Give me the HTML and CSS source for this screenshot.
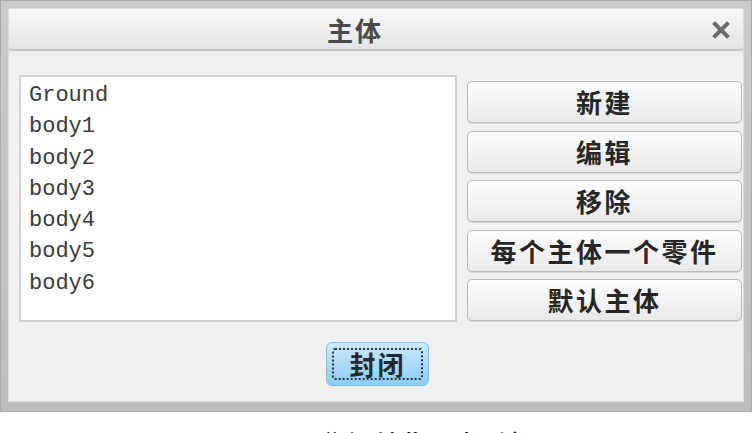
FILE: index.html
```html
<!DOCTYPE html>
<html lang="zh-CN">
<head>
    <meta charset="UTF-8">
    <meta name="viewport" content="width=device-width, initial-scale=1.0">
    <title>主体</title>
    <link rel="stylesheet" href="styles.css">
</head>
<body>
    <div class="frame">
        <div class="window">
            <header class="titlebar">
                <span class="title">主体</span>
                <button class="close-x" title="关闭">
                    <svg width="18" height="18" viewBox="0 0 18 18">
                        <path d="M3 3 L15 15 M15 3 L3 15" stroke="#6b6b6b" stroke-width="4" stroke-linecap="square"/>
                    </svg>
                </button>
            </header>
            <div class="content">
                <div class="row">
                    <ul class="list">
                        <li>Ground</li>
                        <li>body1</li>
                        <li>body2</li>
                        <li>body3</li>
                        <li>body4</li>
                        <li>body5</li>
                        <li>body6</li>
                    </ul>
                    <div class="buttons">
                        <button class="btn">新建</button>
                        <button class="btn">编辑</button>
                        <button class="btn">移除</button>
                        <button class="btn">每个主体一个零件</button>
                        <button class="btn">默认主体</button>
                    </div>
                </div>
                <div class="footer">
                    <button class="btn-close"><span class="focus">封闭</span></button>
                </div>
            </div>
        </div>
    </div>
    <p class="caption">图 3-10 &nbsp;“主体”对话框</p>
</body>
</html>
```

FILE: styles.css
```css
* {
    margin: 0;
    padding: 0;
    box-sizing: border-box;
}
body {
    background: #ffffff;
    width: 756px;
    height: 433px;
    overflow: hidden;
    font-family: "Noto Sans CJK SC", sans-serif;
}
.frame {
    width: 752px;
    height: 412px;
    padding: 7px 7px 9px 7px;
    background: linear-gradient(#c9c9c9, #bdbdbd);
    border: 1px solid #a9a9a9;
}
.window {
    height: 100%;
    background: #eff0f2;
    display: flex;
    flex-direction: column;
    border: 1px solid #dcdcdc;
}
.titlebar {
    height: 42px;
    background: linear-gradient(#f7f7f7, #e3e4e6);
    border-bottom: 2px solid #c4c5c7;
    display: flex;
    align-items: center;
    justify-content: center;
    padding-right: 42px;
    position: relative;
}
.title {
    font-size: 26px;
    font-weight: 700;
    color: #4a4a4a;
    letter-spacing: 2px;
}
.close-x {
    position: absolute;
    right: 12px;
    top: 11px;
    width: 20px;
    height: 20px;
    border: none;
    background: none;
    display: flex;
    align-items: center;
    justify-content: center;
}
.content {
    flex: 1;
    display: flex;
    flex-direction: column;
    padding: 24px 1px 0 10px;
}
.row {
    display: flex;
    gap: 10px;
}
.list {
    list-style: none;
    width: 440px;
    height: 247px;
    background: #ffffff;
    border: 2px solid #cfd0d2;
    padding: 3px 8px;
    font-family: "Liberation Mono", monospace;
    font-size: 22px;
    line-height: 31.3px;
    color: #3a3a3a;
}
.buttons {
    width: 276px;
    display: flex;
    flex-direction: column;
    gap: 7.5px;
    padding-top: 6px;
}
.btn {
    height: 42px;
    border: 1px solid #b9b9b9;
    border-radius: 5px;
    background: linear-gradient(#fdfdfd, #e9e9ea);
    box-shadow: 0 1px 0 #d6d6d6;
    font-family: "Noto Sans CJK SC", sans-serif;
    font-size: 26px;
    font-weight: 700;
    color: #262626;
    letter-spacing: 2.5px;
    line-height: 1;
}
.footer {
    display: flex;
    justify-content: center;
    padding-top: 20px;
    padding-right: 6px;
}
.btn-close {
    width: 103px;
    height: 44px;
    border: 1px solid #79c0ee;
    border-radius: 6px;
    background: linear-gradient(#cbe9fc, #8dccf3);
    padding: 5px;
    font-family: "Noto Sans CJK SC", sans-serif;
    font-size: 26px;
    font-weight: 700;
    color: #1f2a33;
    line-height: 1;
}
.focus {
    display: flex;
    align-items: center;
    justify-content: center;
    height: 100%;
    border: 2px dotted #2b3540;
    border-radius: 3px;
    letter-spacing: 2px;
}
.caption {
    margin-top: 18px;
    padding-left: 178px;
    font-size: 34px;
    line-height: 34px;
    color: #111;
    white-space: nowrap;
}
```
